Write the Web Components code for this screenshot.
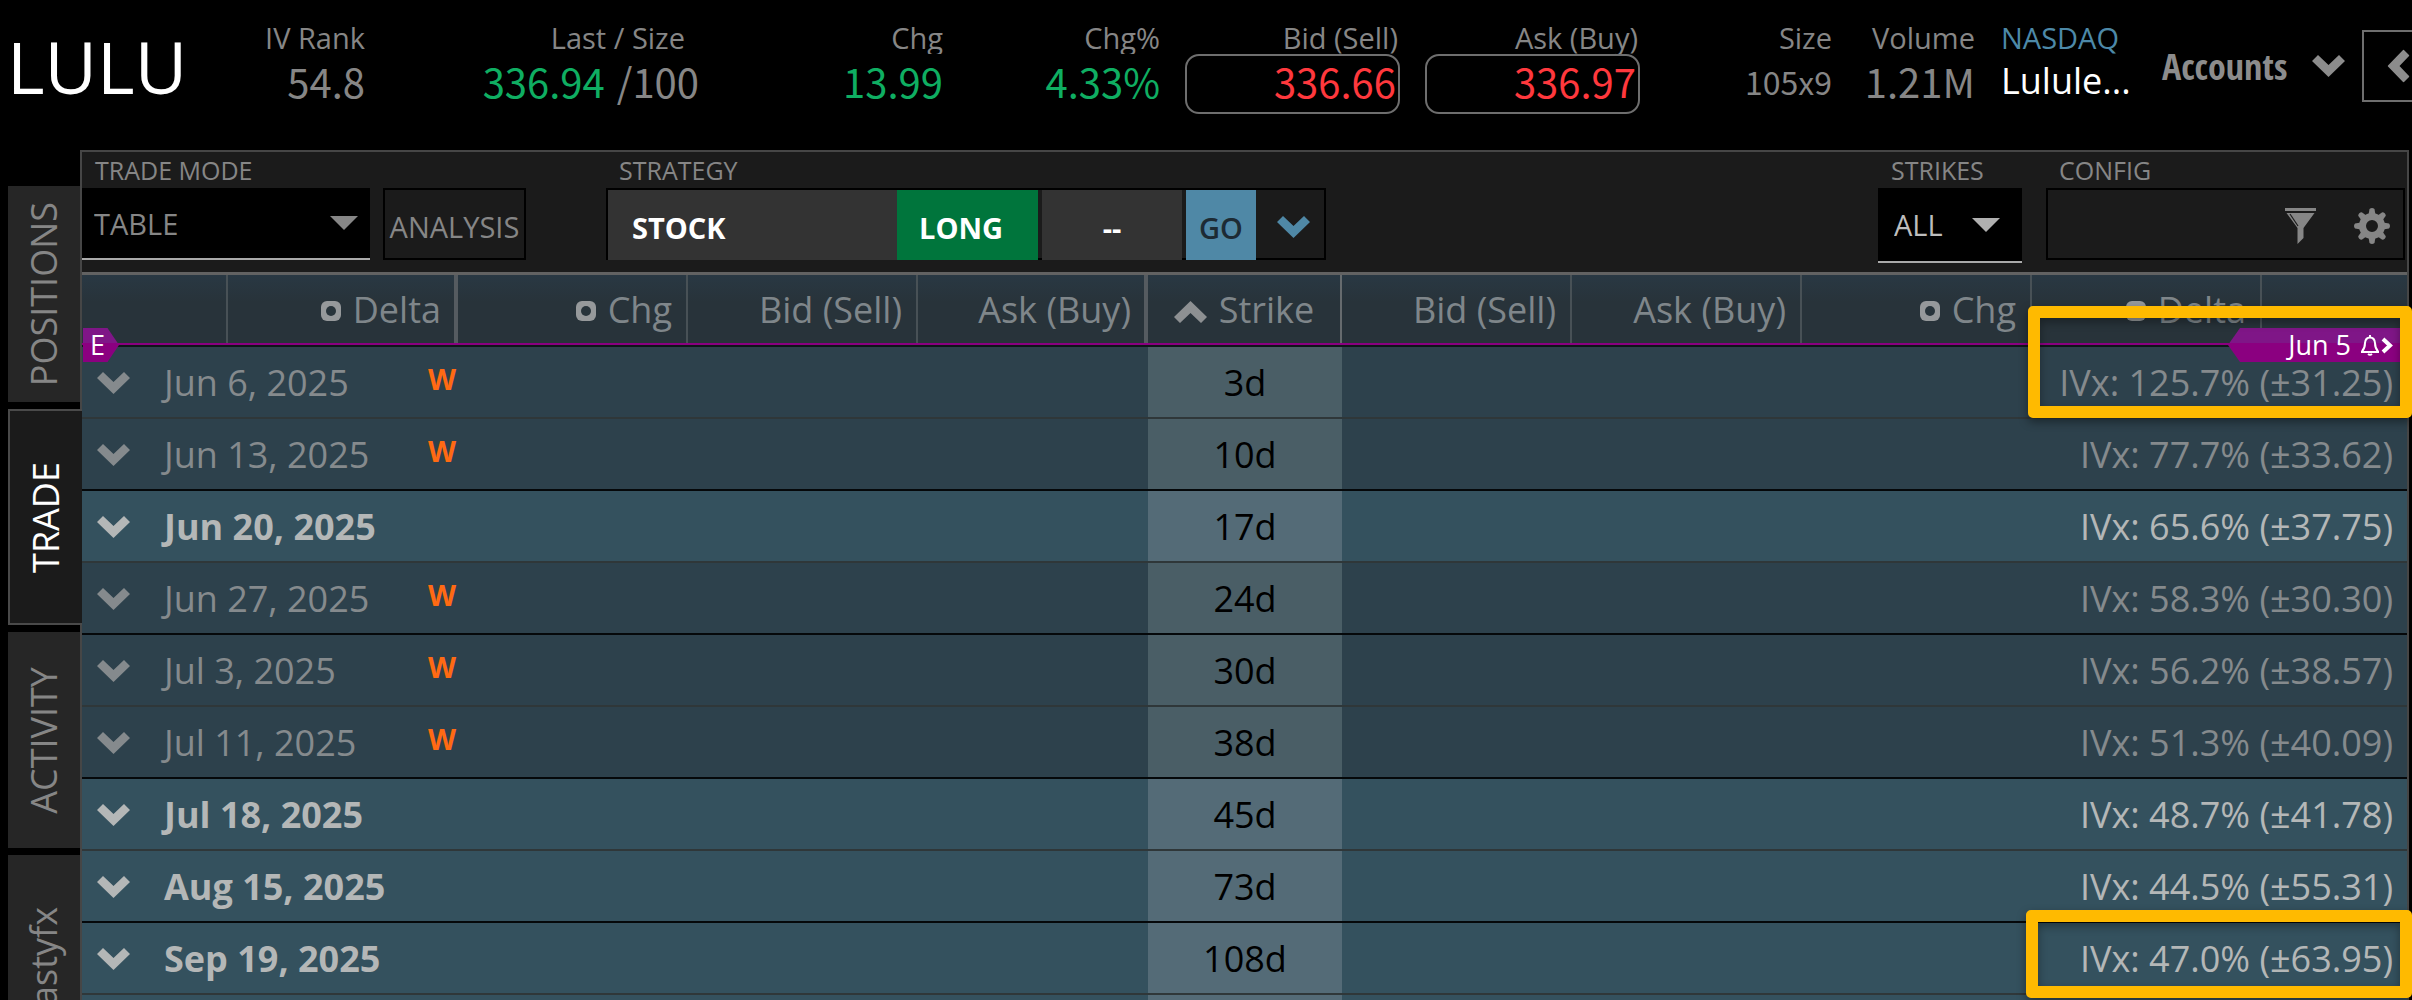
<!DOCTYPE html>
<html lang="en">
<head>
<meta charset="utf-8">
<title>LULU - Trade</title>
<style>
    html, body {
        height: 100%;
    }

    body {
        margin: 0;
        background: #000;
        color: #868686;
        font-family: "Open Sans", "Noto Sans", sans-serif;
        font-size: 29px;
        overflow: hidden;
        display: flex;
        flex-direction: column;
    }

    main {
        flex: 1;
        min-height: 0;
        display: grid;
        grid-template-columns: 80px minmax(0, 1fr);
        padding-right: 3px;
    }

    .last {
        color: #0fae62;
        margin-right: 3px;
    }
</style>
</head>
<body>
    <quote-bar symbol="LULU">
        <quote-cell label="IV Rank">54.8</quote-cell>
        <quote-cell label="Last / Size" inset><span class="last">336.94</span> /100</quote-cell>
        <quote-cell label="Chg" tone="up">13.99</quote-cell>
        <quote-cell label="Chg%" tone="up">4.33%</quote-cell>
        <quote-cell label="Bid (Sell)" tone="down" boxed>336.66</quote-cell>
        <quote-cell label="Ask (Buy)" tone="down" boxed>336.97</quote-cell>
        <quote-cell label="Size" small>105x9</quote-cell>
        <quote-cell label="Volume">1.21M</quote-cell>
        <quote-cell label="NASDAQ" name>Lulule...</quote-cell>
    </quote-bar>
    <main>
        <side-tabs>
            <side-tab>POSITIONS</side-tab>
            <side-tab active>TRADE</side-tab>
            <side-tab>ACTIVITY</side-tab>
            <side-tab>tastyfx</side-tab>
        </side-tabs>
        <trade-panel>
            <trade-toolbar></trade-toolbar>
            <option-chain></option-chain>
        </trade-panel>
    </main>

<script>
const CHEVRON = 'M0 6 L6 0 L16.5 10 L27 0 L33 6 L16.5 22 Z';

class ChevronIcon extends HTMLElement {
    connectedCallback() {
        const turns = { down: 0, left: 90, up: 180, right: 270 };
        const angle = turns[this.getAttribute('dir') || 'down'];
        this.attachShadow({ mode: 'open' });
        this.shadowRoot.innerHTML = `
            <style>
                :host { display: inline-flex; flex: none; }
                svg { display: block; transform: rotate(${angle}deg); }
            </style>
            <svg width="33" height="22" viewBox="0 0 33 22" aria-hidden="true">
                <path fill="currentColor" d="${CHEVRON}"/>
            </svg>
        `;
    }
}

class QuoteCell extends HTMLElement {
    connectedCallback() {
        this.attachShadow({ mode: 'open' });
        this.shadowRoot.innerHTML = `
            <style>
                :host {
                    display: block;
                    min-width: 0;
                    text-align: right;
                    white-space: nowrap;
                }

                .label {
                    height: 32px;
                    line-height: 32px;
                    overflow: hidden;
                }

                .value {
                    border: 2px solid transparent;
                    border-right-width: 0;
                    padding-bottom: 6px;
                    line-height: 50px;
                    height: 50px;
                    font-family: "Noto Sans CJK SC", "Open Sans", sans-serif;
                    font-size: 40px;
                }

                :host([tone="up"]) .value { color: #0fae62; }
                :host([tone="down"]) .value { color: #ff383d; }
                :host([small]) .value { font-size: 32px; }
                :host([inset]) .label { padding-right: 14px; }

                :host([boxed]) .label { padding-right: 2px; }

                :host([boxed]) .value {
                    margin-left: 25px;
                    padding-right: 2px;
                    border-color: #6e6e6e;
                    border-right-width: 2px;
                    border-radius: 14px;
                }

                :host([name]) {
                    text-align: left;
                    padding-left: 26px;
                }

                :host([name]) .label { color: #4d89a8; }

                :host([name]) .value {
                    color: #fff;
                    border-left-width: 0;
                    font-family: "Open Sans", "Noto Sans", sans-serif;
                    font-size: 36px;
                }
            </style>
            <div class="label">${this.getAttribute('label')}</div>
            <div class="value"><slot></slot></div>
        `;
    }
}

class QuoteBar extends HTMLElement {
    connectedCallback() {
        this.attachShadow({ mode: 'open' });
        this.shadowRoot.innerHTML = `
            <style>
                :host {
                    display: grid;
                    grid-template-columns:
                        minmax(0, 199fr) minmax(0, 166fr) minmax(0, 334fr) minmax(0, 244fr)
                        minmax(0, 217fr) minmax(0, 240fr) minmax(0, 240fr) minmax(0, 192fr)
                        minmax(0, 143fr) minmax(0, 187fr) minmax(0, 200fr) minmax(0, 50fr);
                    height: 128px;
                    padding-top: 22px;
                    flex: none;
                }

                .symbol {
                    margin: 0;
                    padding-left: 7px;
                    font-size: 72px;
                    font-weight: 400;
                    line-height: 88px;
                    color: #fff;
                }

                button {
                    background: none;
                    border: 0;
                    padding: 0;
                    color: #8c8c8c;
                    font: inherit;
                }

                .accounts {
                    display: flex;
                    align-items: center;
                    justify-content: space-between;
                    height: 88px;
                    padding-right: 17px;
                    font-family: "Open Sans Condensed", "Liberation Sans Narrow", "Open Sans", sans-serif;
                    font-size: 36px;
                    font-weight: 700;
                }

                .collapse {
                    height: 72px;
                    margin-top: 8px;
                    border: 2px solid #6e6e6e;
                    border-right: 0;
                    display: flex;
                    align-items: center;
                    padding-left: 18px;
                    overflow: hidden;
                }
            </style>
            <h1 class="symbol">${this.getAttribute('symbol')}</h1>
            <slot></slot>
            <button class="accounts" type="button">Accounts <chevron-icon></chevron-icon></button>
            <button class="collapse" type="button" aria-label="Collapse"><chevron-icon dir="left"></chevron-icon></button>
        `;
    }
}

class SideTabs extends HTMLElement {
    connectedCallback() {
        this.attachShadow({ mode: 'open' });
        this.shadowRoot.innerHTML = `
            <style>
                :host {
                    display: flex;
                    flex-direction: column;
                    gap: 7px;
                    padding: 36px 0 0 8px;
                    min-height: 0;
                }
            </style>
            <slot></slot>
        `;
    }
}

class SideTab extends HTMLElement {
    connectedCallback() {
        this.attachShadow({ mode: 'open' });
        this.shadowRoot.innerHTML = `
            <style>
                :host {
                    display: block;
                    flex: none;
                    height: 216px;
                }

                button {
                    display: flex;
                    align-items: center;
                    justify-content: center;
                    box-sizing: border-box;
                    width: 100%;
                    height: 100%;
                    padding: 0;
                    border: 0;
                    background: #262626;
                    color: #868686;
                    font: inherit;
                    font-size: 36px;
                }

                span {
                    writing-mode: vertical-rl;
                    transform: rotate(180deg);
                    line-height: 48px;
                }

                /* the open tab runs over the panel's edge */
                :host([active]) {
                    position: relative;
                    z-index: 1;
                    margin-right: -2px;
                }

                :host([active]) button {
                    background: #1b1b1b;
                    color: #fff;
                    border: 2px solid #4a4a4a;
                    border-right: 0;
                }
            </style>
            <button type="button"><span><slot></slot></span></button>
        `;
    }
}

class TradePanel extends HTMLElement {
    connectedCallback() {
        this.attachShadow({ mode: 'open' });
        this.shadowRoot.innerHTML = `
            <style>
                :host {
                    display: flex;
                    flex-direction: column;
                    min-height: 0;
                    border: 2px solid #464646;
                    border-bottom: 0;
                    background: #1b1b1b;
                }
            </style>
            <slot></slot>
        `;
    }
}

class TradeToolbar extends HTMLElement {
    connectedCallback() {
        const teeth = [0, 45, 90, 135, 180, 225, 270, 315]
            .map(a => `<path transform="rotate(${a} 18 18)" d="M14.5 7 L15.5 1 Q18 -1 20.5 1 L21.5 7 Z"/>`)
            .join('');

        this.attachShadow({ mode: 'open' });
        this.shadowRoot.innerHTML = `
            <style>
                :host {
                    display: flex;
                    align-items: flex-start;
                    padding-bottom: 9px;
                    border-bottom: 3px solid #626262;
                }

                .label {
                    display: block;
                    padding-left: 13px;
                    font-size: 25px;
                    line-height: 36px;
                }

                .controls { display: flex; }

                button {
                    box-sizing: border-box;
                    font: inherit;
                    color: inherit;
                    background: none;
                    border: 0;
                    padding: 0;
                    height: 72px;
                }

                .select { position: relative; }

                select {
                    appearance: none;
                    display: block;
                    box-sizing: border-box;
                    width: 100%;
                    height: 72px;
                    padding: 0 0 0 12px;
                    border: 0;
                    border-bottom: 2px solid #aaa;
                    border-radius: 0;
                    background: #000;
                    color: #868686;
                    font: inherit;
                }

                .select svg {
                    position: absolute;
                    top: 28px;
                    right: 12px;
                    fill: #868686;
                    pointer-events: none;
                }

                .mode { width: 288px; }

                .analysis {
                    margin-left: 13px;
                    padding-top: 4px;
                    width: 143px;
                    border: 2px solid #000;
                }

                .strategy { margin-left: 80px; }

                .strategy .controls {
                    border: 2px solid #000;
                    height: 68px;
                    font-weight: 700;
                    color: #fff;
                }

                .strategy button {
                    height: 70px;
                    padding-top: 4px;
                }

                .stock {
                    width: 289px;
                    background: #333;
                    text-align: left;
                    text-indent: 24px;
                }

                .long {
                    width: 141px;
                    background: #00753c;
                    text-align: left;
                    text-indent: 22px;
                }

                .qty {
                    width: 140px;
                    margin: 0 4px;
                    background: #333;
                }

                .strategy .go {
                    width: 70px;
                    background: #4f88a6;
                    color: #1d2b34;
                    font-weight: 600;
                }

                .more {
                    display: flex;
                    align-items: center;
                    justify-content: flex-end;
                    width: 68px;
                    color: #4f88a6;
                }

                .strategy .more { padding-right: 14px; }

                .strikes {
                    margin-left: auto;
                    width: 144px;
                }

                .strikes select {
                    height: 75px;
                    padding-left: 16px;
                    color: #bdbdbd;
                }

                .strikes .select svg {
                    top: 30px;
                    right: 22px;
                    fill: #b0b0b0;
                }

                .config {
                    margin-left: 24px;
                    width: 359px;
                    margin-right: 2px;
                }

                .config .controls {
                    box-sizing: border-box;
                    height: 72px;
                    border: 2px solid #000;
                    justify-content: flex-end;
                    align-items: center;
                    gap: 38px;
                    padding-right: 13px;
                    padding-top: 4px;
                }

                .config button { height: 36px; }

                .config svg {
                    display: block;
                    fill: #868686;
                }
            </style>
            <div>
                <label class="label" for="mode">TRADE MODE</label>
                <div class="controls">
                    <div class="select mode">
                        <select id="mode"><option>TABLE</option></select>
                        <svg width="28" height="14" viewBox="0 0 28 14"><path d="M0 0 H28 L14 14 Z"/></svg>
                    </div>
                    <button class="analysis" type="button">ANALYSIS</button>
                </div>
            </div>
            <div class="strategy">
                <span class="label">STRATEGY</span>
                <div class="controls">
                    <button class="stock" type="button">STOCK</button>
                    <button class="long" type="button">LONG</button>
                    <button class="qty" type="button">--</button>
                    <button class="go" type="button">GO</button>
                    <button class="more" type="button" aria-label="More"><chevron-icon></chevron-icon></button>
                </div>
            </div>
            <div class="strikes">
                <label class="label" for="strikes">STRIKES</label>
                <div class="select">
                    <select id="strikes"><option>ALL</option></select>
                    <svg width="28" height="14" viewBox="0 0 28 14"><path d="M0 0 H28 L14 14 Z"/></svg>
                </div>
            </div>
            <div class="config">
                <span class="label">CONFIG</span>
                <div class="controls">
                    <button type="button" aria-label="Filter">
                        <svg width="31" height="36" viewBox="0 0 31 36">
                            <path d="M0 0 H31 V3 H0 Z M1.5 5 H29.5 L18.5 20 V30 L12.5 36 V20 Z"/>
                            <path d="M5 6 L13 18" stroke="#1b1b1b" stroke-width="1.2"/>
                        </svg>
                    </button>
                    <button type="button" aria-label="Settings">
                        <svg width="36" height="36" viewBox="0 0 36 36">
                            ${teeth}
                            <circle cx="18" cy="18" r="9.5" fill="none" stroke="#868686" stroke-width="7"/>
                        </svg>
                    </button>
                </div>
            </div>
        `;
    }
}

// yellow frame drawn over the figures being pointed out
class MarkFrame extends HTMLElement {
    connectedCallback() {
        this.attachShadow({ mode: 'open' });
        this.shadowRoot.innerHTML = `
            <style>
                :host {
                    position: absolute;
                    right: -5px;
                    box-sizing: border-box;
                    border: 12px solid #ffba00;
                    border-radius: 5px;
                    box-shadow: 0 4px 10px rgba(0, 0, 0, 0.4), inset 0 4px 10px rgba(0, 0, 0, 0.35);
                    pointer-events: none;
                }
            </style>
        `;
    }
}

const EXPIRATIONS = [
    { date: 'Jun 6, 2025', days: '3d', iv: 'IVx: 125.7% (±31.25)', weekly: true },
    { date: 'Jun 13, 2025', days: '10d', iv: 'IVx: 77.7% (±33.62)', weekly: true },
    { date: 'Jun 20, 2025', days: '17d', iv: 'IVx: 65.6% (±37.75)' },
    { date: 'Jun 27, 2025', days: '24d', iv: 'IVx: 58.3% (±30.30)', weekly: true },
    { date: 'Jul 3, 2025', days: '30d', iv: 'IVx: 56.2% (±38.57)', weekly: true },
    { date: 'Jul 11, 2025', days: '38d', iv: 'IVx: 51.3% (±40.09)', weekly: true },
    { date: 'Jul 18, 2025', days: '45d', iv: 'IVx: 48.7% (±41.78)' },
    { date: 'Aug 15, 2025', days: '73d', iv: 'IVx: 44.5% (±55.31)' },
    { date: 'Sep 19, 2025', days: '108d', iv: 'IVx: 47.0% (±63.95)' },
    { date: '', days: '', iv: '' }
];

class OptionChain extends HTMLElement {
    row(exp) {
        return `
            <tr class="${exp.weekly ? 'weekly' : 'monthly'}">
                <td colspan="5">
                    <div class="expiry">
                        <chevron-icon></chevron-icon>
                        <span>${exp.date}</span>
                        ${exp.weekly ? '<b class="w">W</b>' : ''}
                    </div>
                </td>
                <td class="days">${exp.days}</td>
                <td colspan="5" class="iv">${exp.iv}</td>
            </tr>
        `;
    }

    connectedCallback() {
        const dot = `
            <svg width="20" height="20" viewBox="0 0 20 20">
                <rect width="20" height="20" rx="6" fill="#96999b"/>
                <circle cx="10" cy="10" r="5" fill="#28343b"/>
            </svg>`;

        this.attachShadow({ mode: 'open' });
        this.shadowRoot.innerHTML = `
            <style>
                :host {
                    display: block;
                    position: relative;
                    flex: 1;
                    min-height: 0;
                    overflow: visible;
                    font-size: 36px;
                }

                table {
                    width: 100%;
                    table-layout: fixed;
                    border-collapse: separate;
                    border-spacing: 0;
                    background: #2d414c;
                }

                th, td {
                    padding: 2px 0 0;
                    height: 68px;
                    line-height: 48px;
                    white-space: nowrap;
                }

                th {
                    box-sizing: border-box;
                    padding-right: 14px;
                    font-weight: 400;
                    text-align: right;
                    color: #7f868a;
                    background: linear-gradient(#293843, #28333a 40%);
                    border-right: 2px solid #485156;
                }

                th svg {
                    margin-right: 12px;
                    vertical-align: 2px;
                }

                th.split {
                    padding-right: 13px;
                    border-right: 4px solid #555b60;
                }

                th:last-child { border-right: 0; }

                th.strike {
                    text-align: center;
                    padding-right: 0;
                    border-right-color: #666b6e;
                }

                th chevron-icon {
                    color: #8d9092;
                    margin-right: 12px;
                }

                .earnings td {
                    height: 4px;
                    padding: 0;
                    line-height: 0;
                    box-sizing: border-box;
                    border-top: 2px solid #8b0080;
                    border-bottom: 2px solid #10161a;
                }

                tbody td { border-bottom: 2px solid #2f3739; }
                tbody tr:nth-child(even) td { border-bottom-color: #05080a; }

                .weekly { background: #2d414c; color: #858a8d; }
                .monthly { background: #34515e; color: #b4b7b7; }
                .monthly .expiry { font-weight: 700; }

                .days {
                    text-align: center;
                    color: #000;
                    background: #4a5e66;
                }

                .monthly .days { background: #546b77; }

                .iv {
                    text-align: right;
                    padding-right: 14px;
                }

                .expiry {
                    display: grid;
                    grid-template-columns: 67px 264px auto;
                    align-items: center;
                    padding-left: 15px;
                }

                .w {
                    color: #ff6a13;
                    font-size: 29px;
                    line-height: 40px;
                    padding-bottom: 8px;
                }

                .flag {
                    position: absolute;
                    top: 53px;
                    height: 34px;
                    box-sizing: border-box;
                    display: flex;
                    align-items: center;
                    font-size: 27px;
                    line-height: 34px;
                    color: #fff;
                    background: linear-gradient(#7f1687 45%, #8b0080 45%);
                }

                .flag.e {
                    left: 1px;
                    width: 36px;
                    padding-left: 7px;
                    clip-path: polygon(0 0, 68% 0, 100% 50%, 68% 100%, 0 100%);
                }

                .flag.next {
                    right: 0;
                    width: 179px;
                    padding-right: 14px;
                    justify-content: flex-end;
                    clip-path: polygon(12px 0, 100% 0, 100% 100%, 12px 100%, 0 50%);
                }

                .next svg { margin-left: 10px; }

                mark-frame.first {
                    top: 31px;
                    width: 384px;
                    height: 112px;
                }

                mark-frame.second {
                    top: 635px;
                    width: 386px;
                    height: 88px;
                }
            </style>
            <table>
                <colgroup>
                    <col style="width: 146px"><col><col><col><col>
                    <col style="width: 194px"><col><col><col><col>
                    <col style="width: 145px">
                </colgroup>
                <thead>
                    <tr>
                        <th></th>
                        <th class="split">${dot}Delta</th>
                        <th>${dot}Chg</th>
                        <th>Bid (Sell)</th>
                        <th class="split">Ask (Buy)</th>
                        <th class="strike"><chevron-icon dir="up"></chevron-icon>Strike</th>
                        <th>Bid (Sell)</th>
                        <th>Ask (Buy)</th>
                        <th>${dot}Chg</th>
                        <th>${dot}Delta</th>
                        <th></th>
                    </tr>
                    <tr class="earnings"><td colspan="11"></td></tr>
                </thead>
                <tbody>${EXPIRATIONS.map(this.row).join('')}</tbody>
            </table>
            <div class="flag e">E</div>
            <div class="flag next">
                Jun 5
                <svg width="32" height="21" viewBox="0 0 32 21" fill="none" stroke="#fff">
                    <path stroke-width="2" d="M9 0 V2 M0 17 H18 M1 16.5 Q4 13 4 8 Q4.500 2.500 9 2.500 Q13.500 2.500 14 8 Q14 13 17 16.500 M7 19 Q9 20.500 11 19"/>
                    <path stroke-width="4" d="M22 4 L29 10.500 L22 17"/>
                </svg>
            </div>
            <mark-frame class="first"></mark-frame>
            <mark-frame class="second"></mark-frame>
        `;
    }
}

customElements.define('chevron-icon', ChevronIcon);
customElements.define('quote-cell', QuoteCell);
customElements.define('quote-bar', QuoteBar);
customElements.define('side-tabs', SideTabs);
customElements.define('side-tab', SideTab);
customElements.define('trade-panel', TradePanel);
customElements.define('trade-toolbar', TradeToolbar);
customElements.define('mark-frame', MarkFrame);
customElements.define('option-chain', OptionChain);
</script>
</body>
</html>
